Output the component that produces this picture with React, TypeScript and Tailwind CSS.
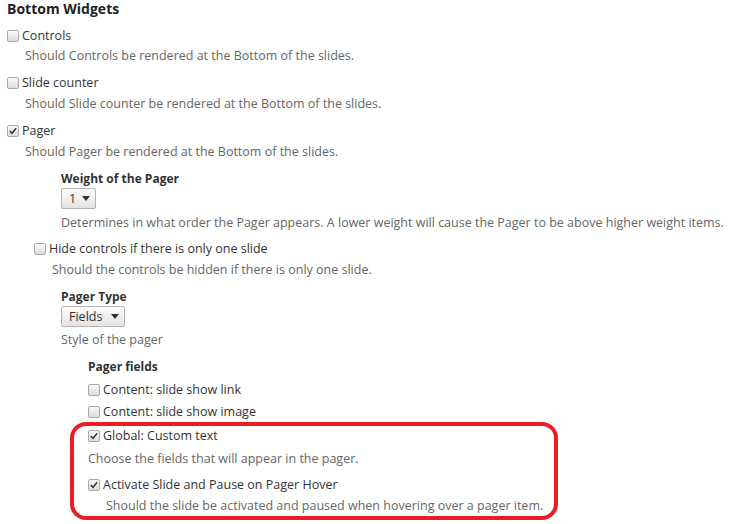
import type { ReactNode } from "react";

const Box = ({ checked }: { checked?: boolean }) => (
  <span className="relative inline-flex h-[12px] w-[12px] shrink-0 items-center justify-center rounded-[2px] border border-[#a9a9a9] bg-gradient-to-b from-[#fafafa] to-[#dcdcdc]">
    {checked && (
      <svg viewBox="0 0 12 12" className="h-[10px] w-[10px]">
        <path d="M2.2 6.2 L4.8 8.8 L9.8 2.6" fill="none" stroke="#3a3a3a" strokeWidth="1.9" />
      </svg>
    )}
  </span>
);

const Check = ({ label, checked, className = "" }: { label: string; checked?: boolean; className?: string }) => (
  <div className={`flex h-5 items-center gap-[3px] whitespace-nowrap text-[#333] ${className}`}>
    <Box checked={checked} />
    <span>{label}</span>
  </div>
);

const Desc = ({ children, className = "" }: { children: ReactNode; className?: string }) => (
  <p className={`h-5 whitespace-nowrap leading-5 text-[#666] ${className}`}>{children}</p>
);

const Select = ({ value, width }: { value: string; width: string }) => (
  <div
    className={`flex h-[21px] ${width} items-center justify-between rounded-[2px] border border-[#b4b4b4] bg-gradient-to-b from-[#fbfbfb] to-[#e4e4e4] pl-[7px] pr-[5px] text-[#333]`}
  >
    <span>{value}</span>
    <svg viewBox="0 0 8 5" className="h-[5px] w-[8px]">
      <path d="M0 0 H8 L4 5 Z" fill="#333" />
    </svg>
  </div>
);

const Heading = ({ children, className = "" }: { children: ReactNode; className?: string }) => (
  <h4 className={`h-[19px] text-[12px] font-bold leading-5 text-[#333] ${className}`}>{children}</h4>
);

export default function App() {
  return (
    <div className="relative h-[524px] w-[742px] overflow-hidden bg-white text-[12.5px] leading-5 [font-family:'Open_Sans',sans-serif]">
      <div className="pl-[7px]">
        <h3 className="h-[18px] text-[14px] font-bold leading-[18px] text-[#222]">Bottom Widgets</h3>

        <div className="mt-[8px]">
          <Check label="Controls" />
          <Desc className="pl-[18px]">Should Controls be rendered at the Bottom of the slides.</Desc>
        </div>

        <div className="mt-[7px]">
          <Check label="Slide counter" />
          <Desc className="mt-[1px] pl-[18px]">Should Slide counter be rendered at the Bottom of the slides.</Desc>
        </div>

        <div className="mt-[7px]">
          <Check label="Pager" checked />
          <Desc className="mt-[1px] pl-[18px]">Should Pager be rendered at the Bottom of the slides.</Desc>
        </div>

        <div className="mt-[7px] pl-[54px]">
          <Heading>Weight of the Pager</Heading>
          <Select value="1" width="w-[35px]" />
          <Desc className="mt-[4px]">Determines in what order the Pager appears. A lower weight will cause the Pager to be above higher weight items.</Desc>
        </div>

        <div className="mt-[6px] pl-[27px]">
          <Check label="Hide controls if there is only one slide" />
          <Desc className="mt-[1px] pl-[18px]">Should the controls be hidden if there is only one slide.</Desc>
        </div>

        <div className="mt-[7px] pl-[54px]">
          <Heading>Pager Type</Heading>
          <Select value="Fields" width="w-[64px]" />
          <Desc className="mt-[3px]">Style of the pager</Desc>

          <div className="mt-[7px] pl-[27px]">
            <Heading>Pager fields</Heading>
            <Check label="Content: slide show link" className="mt-[4px]" />
            <Check label="Content: slide show image" className="mt-[2px]" />
            <Check label="Global: Custom text" checked className="mt-[4px]" />
            <Desc className="mt-[3px]">Choose the fields that will appear in the pager.</Desc>
            <div className="mt-[6px]">
              <Check label="Activate Slide and Pause on Pager Hover" checked />
              <Desc className="mt-[1px] pl-[18px]">Should the slide be activated and paused when hovering over a pager item.</Desc>
            </div>
          </div>
        </div>
      </div>

      <div className="pointer-events-none absolute left-[70px] top-[422px] h-[98px] w-[488px] rounded-[16px] border-[4px] border-[#ec1c24]" />
    </div>
  );
}
